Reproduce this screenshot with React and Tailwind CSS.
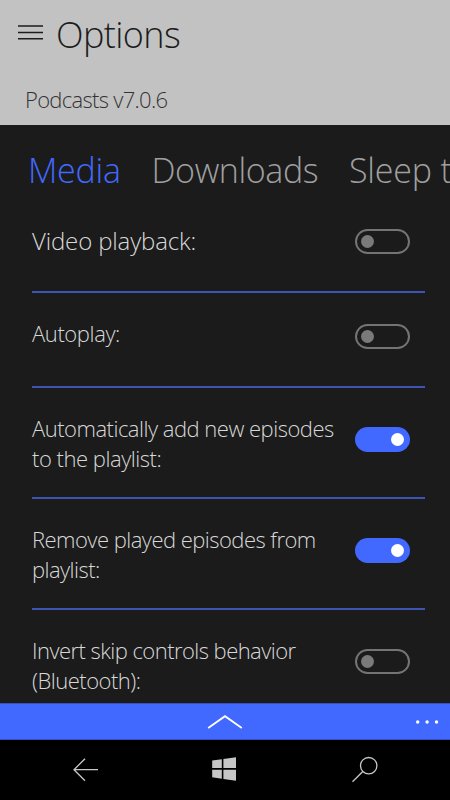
function Toggle({ on }) {
  return (
    <span
      role="switch"
      aria-checked={on}
      className={
        on
          ? "mb-[6px] flex h-[25px] w-[55px] shrink-0 items-center justify-end rounded-full bg-[#4169ff] pr-[6px]"
          : "mb-[6px] flex h-[25px] w-[55px] shrink-0 items-center rounded-full border-2 border-[#747474] pl-[4px]"
      }
    >
      <span className={on ? "size-[13px] rounded-full bg-white" : "size-[13px] rounded-full bg-[#7a7a7a]"} />
    </span>
  );
}

function Row({ lines, on, height, pad = "pt-[25px]", last }) {
  return (
    <div
      className={`flex shrink-0 items-center justify-between pr-[15px] ${height} ${last ? "" : "border-b-2 border-[#3d54b4]"}`}
    >
      <div className={`self-start text-[#d8d8d8] ${pad}`}>
        {lines.map(([text, style]) => (
          <div key={text} className={`h-[30px] leading-[30px] whitespace-nowrap ${style}`}>
            {text}
          </div>
        ))}
      </div>
      <Toggle on={on} />
    </div>
  );
}

export default function App() {
  return (
    <div className="flex h-[800px] w-[450px] flex-col overflow-hidden bg-[#1b1b1b] font-['Open_Sans',sans-serif] font-light">
      <header className="flex h-[125px] shrink-0 flex-col bg-[#c2c2c2] text-[#1c1c1c]">
        <div className="flex h-[70px] items-start pl-[17px]">
          <svg className="mt-[24px] h-[18px] w-[27px] shrink-0" viewBox="0 0 27 18" stroke="#1c1c1c" strokeWidth="1.5">
            <path d="M1 2H26M1 8.5H26M1 14.7H26" />
          </svg>
          <h1 className="ml-[12px] pt-[10px] text-[36px] leading-[50px] tracking-[-0.6px] whitespace-nowrap">Options</h1>
        </div>
        <p className="pl-[25px] pt-[14px] text-[22px] leading-[30px] tracking-[-0.7px] whitespace-nowrap text-[#333]">
          Podcasts v7.0.6
        </p>
      </header>

      <nav className="flex h-[73px] shrink-0 pt-[21px] pl-[28px] text-[34px] leading-[48px] whitespace-nowrap text-[#a0a0a0]">
        <span className="w-[123.5px] shrink-0 tracking-[-0.25px] text-[#4169ff]">Media</span>
        <span className="w-[197.5px] shrink-0 tracking-[-0.4px]">Downloads</span>
        <span className="shrink-0 tracking-[-0.2px]">Sleep timer</span>
      </nav>

      <main className="flex min-h-0 flex-1 flex-col overflow-hidden pr-[25px] pl-[32px]">
        <Row height="h-[95px]" pad="pt-[28px]" lines={[["Video playback:", "text-[24px] tracking-[-0.15px]"]]} on={false} />
        <Row height="h-[95px]" lines={[["Autoplay:", "text-[22px] tracking-[-0.4px]"]]} on={false} />
        <Row
          height="h-[111px]"
          lines={[
            ["Automatically add new episodes", "text-[22px] tracking-[-0.5px]"],
            ["to the playlist:", "text-[22px] tracking-[-0.47px]"],
          ]}
          on
        />
        <Row
          height="h-[111px]"
          lines={[
            ["Remove played episodes from", "text-[22px] tracking-[-0.53px]"],
            ["playlist:", "text-[22px] tracking-[-0.55px]"],
          ]}
          on
        />
        <Row
          height="h-[109px]"
          lines={[
            ["Invert skip controls behavior", "text-[22px] tracking-[-0.55px]"],
            ["(Bluetooth):", "text-[22px] tracking-[-0.5px]"],
          ]}
          on={false}
          last
        />
      </main>

      <div className="grid h-[37px] shrink-0 grid-cols-3 items-center border-y border-[#3750bd] bg-[#4169ff]">
        <span />
        <svg className="h-[16px] w-[36px] justify-self-center" viewBox="0 0 36 16" fill="none" stroke="#fff" strokeWidth="1.8">
          <path d="M1.2 14L18 2.2L34.8 14" />
        </svg>
        <svg className="mr-[10px] h-[4px] w-[25px] justify-self-end" viewBox="0 0 25 4" fill="#fff">
          <circle cx="2.7" cy="2" r="1.7" />
          <circle cx="12.1" cy="2" r="1.7" />
          <circle cx="21.5" cy="2" r="1.7" />
        </svg>
      </div>

      <div className="flex h-[60px] shrink-0 bg-black pt-[16px] pl-[72px]">
        <svg className="h-[28px] w-[27px]" viewBox="0 0 27 28" fill="none" stroke="#c8c8c8" strokeWidth="1.3">
          <path d="M26 13.7H1.8M13 2.7L2 13.7L13 24.7" />
        </svg>
        <svg className="ml-[112px] h-[28px] w-[26px]" viewBox="0 0 26 28" fill="#c6c6c6">
          <path d="M1.2 4.5L10.8 3.2V12H1.2ZM12.4 3L25 1.2V12H12.4ZM1.2 13.8H10.8V22.7L1.2 21.3ZM12.4 13.8H25V24.8L12.4 23Z" />
        </svg>
        <svg className="ml-[114px] h-[28px] w-[28px]" viewBox="0 0 28 28" fill="none" stroke="#c8c8c8" strokeWidth="1.3">
          <circle cx="17.7" cy="9.7" r="8.2" />
          <path d="M11.8 15.5L1.5 25.7" />
        </svg>
      </div>
    </div>
  );
}
